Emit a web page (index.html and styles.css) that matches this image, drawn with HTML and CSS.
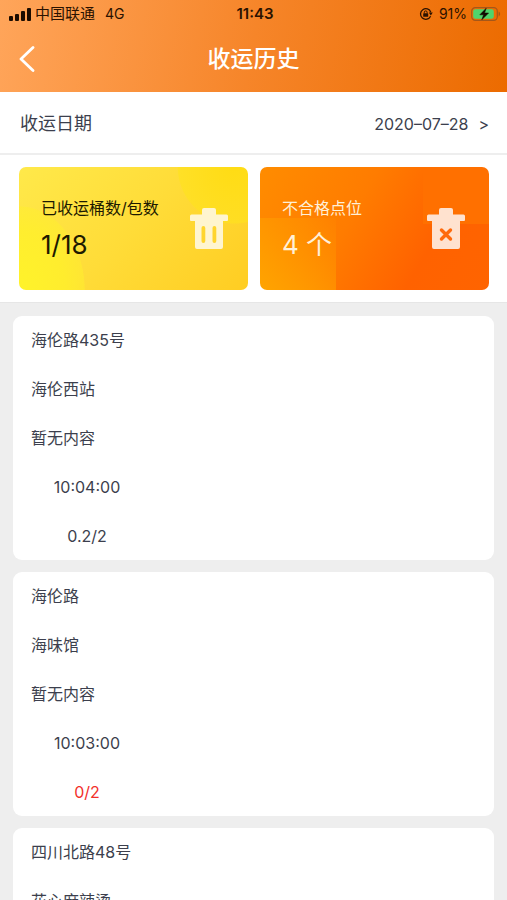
FILE: index.html
```html
<!DOCTYPE html>
<html lang="zh-CN">
<head>
<meta charset="utf-8">
<meta name="viewport" content="width=device-width, initial-scale=1">
<title>收运历史</title>
<link rel="stylesheet" href="styles.css">
</head>
<body>
<div class="app">
  <header class="header">
    <div class="status">
      <div class="status-side">
        <svg class="signal" width="22" height="14" viewBox="0 0 22 14" aria-hidden="true">
          <rect x="0" y="9" width="4" height="5" rx="1"/>
          <rect x="6" y="7" width="4" height="7" rx="1"/>
          <rect x="12" y="4" width="4" height="10" rx="1"/>
          <rect x="18" y="1" width="4" height="13" rx="1"/>
        </svg>
        <span class="carrier">中国联通</span>
        <span class="network">4G</span>
      </div>
      <span class="clock">11:43</span>
      <div class="status-side status-right">
        <svg width="14" height="14" viewBox="0 0 14 14" aria-hidden="true">
          <path d="M11.6 9.3A5.3 5.3 0 1 1 11.8 5.2" fill="none" stroke="#2b1200" stroke-width="1.3"/>
          <path d="M9.8 5.6h4l-2 3z" fill="#2b1200"/>
          <rect x="4.2" y="6.2" width="5" height="3.6" rx=".6" fill="#2b1200"/>
          <path d="M5.3 6.4V5.3a1.4 1.4 0 0 1 2.8 0v1.1" fill="none" stroke="#2b1200"/>
        </svg>
        <span class="percent">91%</span>
        <svg width="30" height="14" viewBox="0 0 30 14" aria-hidden="true">
          <rect x=".7" y=".7" width="25.6" height="12.6" rx="3.6" fill="none" stroke="#a4571a" stroke-width="1.2"/>
          <path d="M27.6 4.6c2 .8 2 4 0 4.8z" fill="#a4571a"/>
          <rect x="2.2" y="2.2" width="20.6" height="9.6" rx="2.2" fill="#4fd56c"/>
          <path d="M15.2 1.2 8.8 7.8h3.8l-1.8 5 6.8-6.8h-4z" fill="#120800" stroke="#120800" stroke-width=".5" stroke-linejoin="round"/>
        </svg>
      </div>
    </div>
    <div class="nav">
      <button class="back" type="button" aria-label="返回">
        <svg width="16" height="26" viewBox="0 0 16 26" aria-hidden="true"><path d="M14 1.500 2 13l12 11.500" fill="none" stroke="#fff" stroke-width="2.800" stroke-linecap="round" stroke-linejoin="round"/></svg>
      </button>
      <h1 class="title">收运历史</h1>
    </div>
  </header>

  <section class="date-row">
    <span id="date-label">收运日期</span>
    <button class="date-picker" type="button" aria-labelledby="date-label date-value"><span id="date-value">2020–07–28</span><span>&gt;</span></button>
  </section>

  <section class="stats">
    <div class="stat stat-yellow">
      <div class="stat-text">
        <span class="stat-label">已收运桶数/包数</span>
        <span class="stat-value">1/18</span>
      </div>
      <svg width="38" height="42" viewBox="0 0 38 42" aria-hidden="true">
        <path fill="#fff5cf" fill-rule="evenodd" d="M14 0h10q2 0 2 2v4.500h10.500q1.500 0 1.500 1.500v4q0 1-1 1h-4v26q0 2-2 2H7q-2 0-2-2V13H1q-1 0-1-1V8q0-1.500 1.500-1.500H12V2q0-2 2-2zM11.500 20v13a1.900 1.900 0 0 0 3.800 0V20a1.900 1.900 0 0 0-3.800 0zM22.500 20v13a1.900 1.900 0 0 0 3.800 0V20a1.900 1.900 0 0 0-3.800 0z"/>
      </svg>
    </div>
    <div class="stat stat-orange">
      <div class="stat-text">
        <span class="stat-label">不合格点位</span>
        <span class="stat-value">4 个</span>
      </div>
      <svg width="38" height="42" viewBox="0 0 38 42" aria-hidden="true">
        <path fill="#ffe2cf" d="M14 0h10q2 0 2 2v4.500h10.500q1.500 0 1.500 1.500v4q0 1-1 1h-4v26q0 2-2 2H7q-2 0-2-2V13H1q-1 0-1-1V8q0-1.500 1.500-1.500H12V2q0-2 2-2z"/>
        <path d="m14.500 22 9 9m0-9-9 9" stroke="#ff6a0c" stroke-width="3.400" stroke-linecap="round"/>
      </svg>
    </div>
  </section>

  <main class="list">
    <article class="card">
      <p>海伦路435号</p>
      <p>海伦西站</p>
      <p>暂无内容</p>
      <p class="center">10:04:00</p>
      <p class="center">0.2/2</p>
    </article>
    <article class="card">
      <p>海伦路</p>
      <p>海味馆</p>
      <p>暂无内容</p>
      <p class="center">10:03:00</p>
      <p class="center alert">0/2</p>
    </article>
    <article class="card">
      <p>四川北路48号</p>
      <p>花心麻辣烫</p>
    </article>
  </main>
</div>
</body>
</html>
```
FILE: styles.css
```css
* {
  box-sizing: border-box;
}

body {
  margin: 0;
  font-family: Inter, "Noto Sans CJK SC", sans-serif;
  font-size: 16px;
  line-height: 24px;
  color: #3c3f4d;
  background: #eee;
}

h1,
p {
  margin: 0;
}

button {
  padding: 0;
  border: 0;
  background: none;
  color: inherit;
  font: inherit;
  cursor: pointer;
}

svg {
  display: block;
  flex: none;
}

.app {
  display: flex;
  flex-direction: column;
  height: 100vh;
  overflow: hidden;
}

.header {
  flex: none;
  background: linear-gradient(100deg, #ffa55a 0%, #f68529 50%, #ec6b00 100%);
}

.status {
  display: grid;
  grid-template-columns: 1fr auto 1fr;
  align-items: center;
  height: 28px;
  padding: 0 6px 0 9px;
  font-size: 14px;
  line-height: 20px;
  color: #2b1200;
}

.status-side {
  display: flex;
  align-items: center;
  gap: 4px;
}

.status-right {
  justify-content: flex-end;
}

.signal {
  fill: #1c0c00;
}

.carrier {
  font-size: 15px;
}

.network {
  margin-left: 6px;
}

.percent {
  margin-left: 2px;
}

.clock {
  font-size: 15px;
  font-weight: 600;
}

.nav {
  display: grid;
  grid-template-columns: 48px 1fr 48px;
  align-items: center;
  height: 64px;
  padding-bottom: 2px;
}

.back {
  display: flex;
  align-items: center;
  height: 48px;
  padding-left: 19px;
}

.title {
  font-size: 23px;
  font-weight: 500;
  line-height: 32px;
  text-align: center;
  color: #fff;
}

.date-row {
  display: flex;
  flex: none;
  align-items: center;
  justify-content: space-between;
  height: 63px;
  padding: 2px 18px 0 20px;
  border-bottom: 2px solid #eee;
  background: #fff;
  font-size: 18px;
}

.date-picker {
  display: flex;
  gap: 10px;
  font-size: 16px;
}

.stats {
  display: grid;
  flex: none;
  grid-template-columns: 1fr 1fr;
  gap: 12px;
  padding: 12px 18px 12px 19px;
  background: #fff;
}

.stat {
  display: flex;
  align-items: center;
  justify-content: space-between;
  height: 123px;
  padding: 0 20px 0 22px;
  border-radius: 7px;
}

.stat-yellow {
  color: #1d1a00;
  background:
    radial-gradient(circle at 94% 0, #ffdc14 0, #ffe21eaa 56px, transparent 57px),
    radial-gradient(66px 84px at 0 100%, #fff32a 0%, #fff02acc 70%, #ffee2e88 99%, transparent 100%),
    linear-gradient(135deg, #ffe94a 0%, #ffdc38 50%, #ffcd22 100%);
}

.stat-orange {
  padding-right: 24px;
  color: #fff0d8;
  background:
    linear-gradient(#ff7000, #ff7000) right top / 66px 57px no-repeat,
    linear-gradient(45deg, #ffa400 0%, #ff9c00aa 50%, #ff900022 100%) left bottom / 76px 72px no-repeat,
    linear-gradient(120deg, #ff8c00 0%, #ff7c00 40%, #ff6200 72%, #ff6400 100%);
}

.stat-text {
  display: flex;
  flex-direction: column;
  gap: 8px;
}

.stat-label {
  line-height: 24px;
}

.stat-value {
  font-size: 26px;
  line-height: 34px;
}

.list {
  display: flex;
  flex: 1;
  flex-direction: column;
  gap: 12px;
  min-height: 0;
  padding: 13px;
  border-top: 1px solid #e6e6e6;
  overflow: hidden;
}

.card {
  display: grid;
  flex: none;
  grid-template-rows: repeat(5, 1fr);
  grid-template-columns: 112px;
  align-items: center;
  min-height: 244px;
  padding: 0 18px;
  border-radius: 9px;
  background: #fff;
  white-space: nowrap;
}

.center {
  text-align: center;
}

.alert {
  color: #f2302b;
}
```
